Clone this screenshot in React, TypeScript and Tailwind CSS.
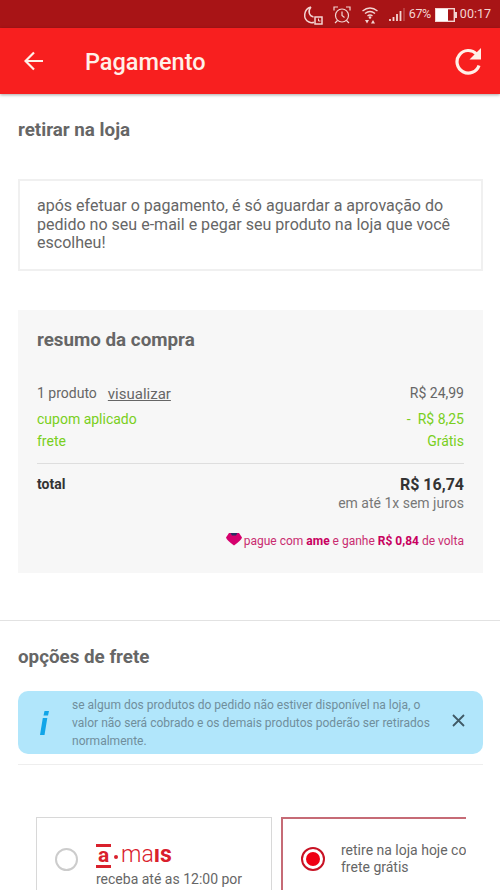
import React from 'react';

function StatusBar() {
  return (
    <div className="flex h-7 items-center justify-end bg-[#a81416] pr-[9px] pt-px text-[12px] text-[#f3d5d2]">
      {/* Não perturbe */}
      <svg width="21" height="20" viewBox="0 0 21 20" fill="none" stroke="currentColor" strokeWidth="1.5">
        <path d="M8 2C0.500 4 -0.500 14 6 17Q8.500 18.300 11 17.200M8 2C4.500 6 6 11 10.500 12" />
        <rect x="12" y="12" width="7" height="7" />
        <path d="M15.500 13.500v2.500h2" strokeWidth="1" />
      </svg>
      {/* Alarme */}
      <svg className="ml-[9px]" width="18" height="18" viewBox="0 0 18 18" fill="none" stroke="currentColor" strokeWidth="1.2">
        <circle cx="9" cy="9.500" r="6.500" />
        <path d="M9 5.500v4l2.500 2M1 4.500V1h4M13 1h4v3.500M4.500 14.500 2 17M13.500 14.500 16 17" />
      </svg>
      {/* Wi-Fi */}
      <svg className="ml-[10px]" width="18" height="18" viewBox="0 0 18 18" fill="none" stroke="currentColor" strokeWidth="1.4">
        <path d="M1.500 5Q9-1 16.500 5M4 7.500Q9 3.500 14 7.500M6.500 10Q9 8 11.500 10" />
        <circle cx="9" cy="11.500" r="1.300" fill="currentColor" stroke="none" />
        <path d="M4 14h4l-2 3.500zM10 17.500h4L12 14z" fill="currentColor" stroke="none" />
      </svg>
      {/* Sinal */}
      <svg className="ml-[9px]" width="18" height="14" viewBox="0 0 18 14" stroke="currentColor" strokeWidth="1.8">
        <path d="M2 11v2M5.500 9v4M9 6v7M12.500 3v10" />
        <path d="M16 0v13" strokeWidth="1" opacity="0.45" />
      </svg>
      <span className="ml-[3px] w-[23px] text-[12.5px] tracking-[-0.5px]">67%</span>
      {/* Bateria */}
      <svg className="ml-[3px]" width="22" height="14" viewBox="0 0 22 14" fill="none">
        <rect x="0.700" y="0.700" width="18.600" height="12.600" stroke="#f3d5d2" strokeWidth="1.400" />
        <rect x="1" y="1" width="12" height="12" fill="#fff" />
        <rect x="20" y="4" width="2" height="6" fill="#f3d5d2" />
      </svg>
      <span className="ml-[3px] text-[12.5px]">00:17</span>
    </div>
  );
}

function Header() {
  return (
    <header className="flex h-[66px] items-center bg-[#f81f1f] pl-6 pr-[18px] text-[#fff0e8] shadow-[0_1px_3px_rgba(0,0,0,0.35)]">
      <svg width="20" height="20" viewBox="0 0 20 20" fill="none" stroke="currentColor" strokeWidth="2.2">
        <path d="M19 10H1.500M10 1.500 1.500 10l8.500 8.500" />
      </svg>
      <h1 className="ml-[41px] flex-1 pt-[3px] text-[23.5px] font-medium">Pagamento</h1>
      <svg width="28" height="28" viewBox="0 0 28 28" fill="none" stroke="currentColor" strokeWidth="3.2">
        <path d="M25 18.500A11.300 11.300 0 1 1 22.500 7" />
        <path d="M27 1v11.500H15.500z" fill="currentColor" stroke="none" />
      </svg>
    </header>
  );
}

function Summary() {
  return (
    <section className="ml-[18px] mr-[17px] mt-[39px] h-[263px] bg-[#f7f7f7] px-[19px] pt-[19px]">
      <h2 className="text-[18.8px] font-bold leading-[22px]">resumo da compra</h2>
      <div className="mt-[32px] flex h-[25px] justify-between text-[14px] leading-5">
        <div className="flex">
          <span>1 produto</span>
          <a className="ml-[11px] mt-px text-[15px] underline">visualizar</a>
        </div>
        <span>R$ 24,99</span>
      </div>
      <div className="flex justify-between text-[14px] leading-[22px] text-[#79cf20]">
        <span>cupom aplicado</span>
        <span>-&nbsp; R$ 8,25</span>
      </div>
      <div className="flex justify-between text-[14px] leading-[22px] text-[#79cf20]">
        <span>frete</span>
        <span>Grátis</span>
      </div>
      <div className="mt-[11px] flex justify-between border-t border-[#dedede] pt-[10px]">
        <strong className="text-[14px] leading-5 text-[#333]">total</strong>
        <div className="text-right">
          <strong className="block text-[16px] leading-[22px] text-[#333]">R$ 16,74</strong>
          <span className="-mt-px block text-[14px] leading-4 text-[#777]">em até 1x sem juros</span>
        </div>
      </div>
      <div className="mt-5 flex items-center justify-end text-[12px] leading-5 text-[#c92c70]">
        <svg className="-mt-1 mr-[2px]" width="16" height="13" viewBox="0 0 16 13">
          <path d="M3 0h10l3 4.500Q15.500 7 8 12.500 0.500 7 0 4.500z" fill="#d5006d" />
          <path d="M4.500 0h7L10 2.500H6z" fill="#263060" />
        </svg>
        <span>pague com <b className="text-[#c8005f]">ame</b> e ganhe <b className="text-[#c8005f]">R$ 0,84</b> de volta</span>
      </div>
    </section>
  );
}

function Notice() {
  return (
    <div className="ml-[18px] mr-[17px] mt-[23px] flex h-[63px] items-center rounded-[10px] bg-[#b1e6fb]">
      <svg className="ml-[21px]" width="11" height="24" viewBox="0 0 11 24" fill="#11a5e8">
        <path d="M5.500 0h4.500l-1 4.500H4.500zM3.800 7h4.500L5.500 24H1z" />
      </svg>
      <p className="ml-[22px] w-[370px] whitespace-nowrap text-[12.04px] leading-[18px] text-[#708e9b]">
        se algum dos produtos do pedido não estiver disponível na loja, o<br />
        valor não será cobrado e os demais produtos poderão ser retirados<br />
        normalmente.
      </p>
      <svg className="-mt-1 ml-[10px]" width="13" height="13" viewBox="0 0 13 13" fill="none" stroke="#405a66" strokeWidth="1.8">
        <path d="m1 1 11 11M12 1 1 12" />
      </svg>
    </div>
  );
}

function ShippingOptions() {
  return (
    <div className="ml-9 mt-[52px] flex w-[430px] overflow-hidden text-[14px] leading-[17px]">
      <div className="flex h-[120px] w-[236px] shrink-0 border border-[#d8d8d8] pl-[18px]">
        <span className="mt-[30px] h-[23px] w-[23px] shrink-0 rounded-full border-2 border-[#ccc]" />
        <div className="ml-[18px] pt-[26px]">
          <div className="flex h-[27px] items-start text-[23px] leading-6 text-[#d9202c]">
            <span className="flex h-6 w-[15px] items-center justify-center border-y-[3px] border-[#d9202c] text-[21px] font-bold">
              <span className="-mt-[3px]">a</span>
            </span>
            <span className="mx-[3px] mt-[11px] h-1 w-1 rounded-full bg-[#d9202c]" />
            <span className="-mt-px font-light">ma</span>
            <span className="-mt-px font-bold">ıs</span>
          </div>
          <p className="whitespace-nowrap">receba até as 12:00 por<br />mês</p>
        </div>
      </div>
      <div className="ml-[9px] flex h-[120px] w-[236px] shrink-0 border-2 border-[#c66b76] pl-[18px]">
        <span className="mt-[28px] flex h-6 w-6 shrink-0 items-center justify-center rounded-full border-2 border-[#c81224]">
          <span className="h-[14px] w-[14px] rounded-full bg-[#ef0014]" />
        </span>
        <p className="ml-4 whitespace-nowrap pt-[23px]">retire na loja hoje com<br />frete grátis</p>
      </div>
    </div>
  );
}

export default function App() {
  return (
    <div className="h-[890px] w-[500px] overflow-hidden bg-white font-['Roboto',sans-serif] text-[#666]">
      <StatusBar />
      <Header />
      <h2 className="ml-[18px] mt-[25px] text-[18.8px] font-bold leading-[22px]">retirar na loja</h2>
      <p className="ml-[18px] mr-[17px] mt-[38px] h-[92px] whitespace-nowrap border-2 border-[#f0f0f0] px-[17px] pt-4 text-[16.04px] leading-[18.5px]">
        após efetuar o pagamento, é só aguardar a aprovação do<br />
        pedido no seu e-mail e pegar seu produto na loja que você<br />
        escolheu!
      </p>
      <Summary />
      <hr className="mt-[47px] border-[#e2e2e2]" />
      <h2 className="ml-[18px] mt-[25px] text-[18.8px] font-bold leading-[22px]">opções de frete</h2>
      <Notice />
      <hr className="ml-[18px] mr-[17px] mt-[10px] border-[#eee]" />
      <ShippingOptions />
    </div>
  );
}
